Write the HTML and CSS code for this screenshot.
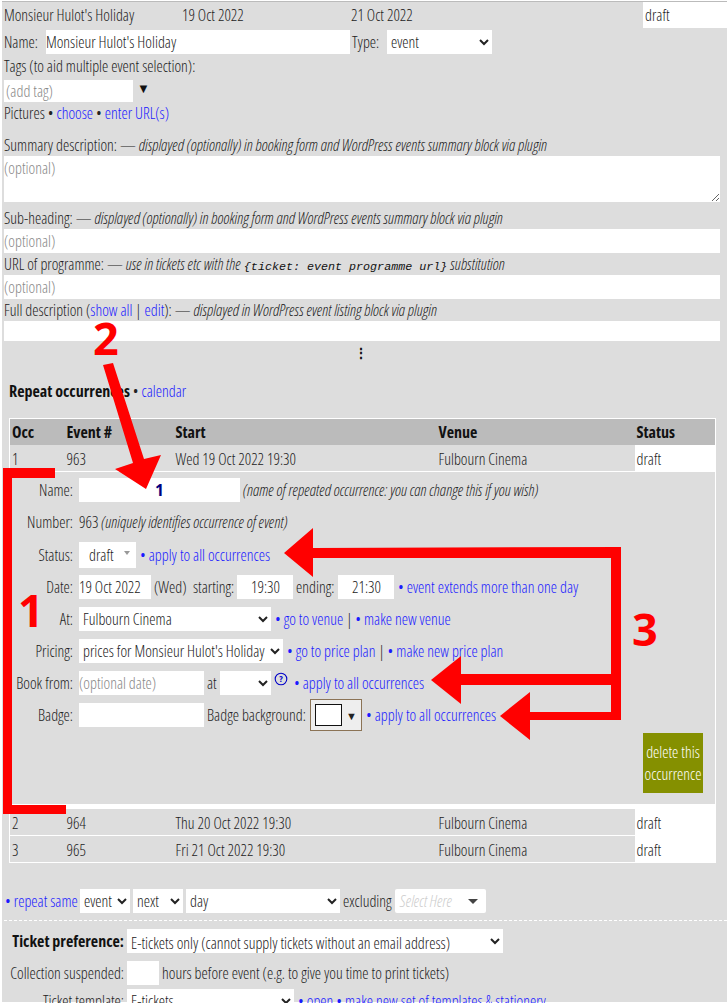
FILE: index.html
```html
<!DOCTYPE html>
<html lang="en">

<head>
  <meta charset="UTF-8">
  <title>Monsieur Hulot's Holiday</title>
  <link rel="stylesheet" href="styles.css">
</head>

<body>
  <div class="page">
    <div class="row summary">
      <span class="sum-title">Monsieur Hulot's Holiday</span>
      <span class="sum-start">19 Oct 2022</span>
      <span class="sum-end">21 Oct 2022</span>
      <input class="sum-status" type="text" value="draft">
    </div>
    <div class="row name-row">
      <label class="name-label">Name:</label>
      <input class="name-input" type="text" value="Monsieur Hulot's Holiday">
      <label class="type-label">Type:</label>
      <select class="type-select"><option>event</option></select>
    </div>
    <div class="line tags-line">Tags (to aid multiple event selection):</div>
    <div class="row tag-row">
      <input class="tag-input" type="text" placeholder="(add tag)">
      <span class="tag-arrow">▼</span>
    </div>
    <div class="line">Pictures • <a href="#">choose</a> • <a href="#">enter URL(s)</a></div>
    <div class="line summary-label">Summary description: — <em>displayed (optionally) in booking form and WordPress events summary block via plugin</em></div>
    <textarea class="wide summary-box" placeholder="(optional)"></textarea>
    <div class="line sub-label">Sub-heading: — <em>displayed (optionally) in booking form and WordPress events summary block via plugin</em></div>
    <input class="wide" type="text" placeholder="(optional)">
    <div class="line">URL of programme: — <em>use in tickets etc with the</em> <code>{ticket: event programme url}</code> <em>substitution</em></div>
    <input class="wide" type="text" placeholder="(optional)">
    <div class="line">Full description (<a href="#">show all</a> | <a href="#">edit</a>): — <em>displayed in WordPress event listing block via plugin</em></div>
    <div class="wide full-box"></div>
    <div class="more">⋮</div>

    <div class="repeat-head"><strong>Repeat occurrences</strong> • <a href="#">calendar</a></div>

    <table class="occ-table">
      <colgroup>
        <col class="col-occ">
        <col class="col-event">
        <col class="col-start">
        <col class="col-venue">
        <col class="col-status">
      </colgroup>
      <thead>
        <tr>
          <th>Occ</th>
          <th>Event #</th>
          <th>Start</th>
          <th>Venue</th>
          <th>Status</th>
        </tr>
      </thead>
      <tbody>
        <tr>
          <td>1</td>
          <td>963</td>
          <td>Wed 19 Oct 2022 19:30</td>
          <td>Fulbourn Cinema</td>
          <td class="status-cell">draft</td>
        </tr>
        <tr>
          <td colspan="5" class="detail-cell">
            <div class="detail">
              <div class="d-row d-name">
                <span class="d-label">Name:</span>
                <input class="occ-name" type="text" value="1">
                <em>(name of repeated occurrence: you can change this if you wish)</em>
              </div>
              <div class="d-row d-number">
                <span class="d-label">Number:</span>
                <span>963 <em>(uniquely identifies occurrence of event)</em></span>
              </div>
              <div class="d-row d-status">
                <span class="d-label">Status:</span>
                <span class="status-pick">draft<span class="status-caret"></span></span>
                <span class="d-links"><a href="#">• apply to all occurrences</a></span>
              </div>
              <div class="d-row">
                <span class="d-label">Date:</span>
                <input class="date-input" type="text" value="19 Oct 2022">
                <span class="wed">(Wed)</span>
                <span class="starting">starting:</span>
                <input class="time-input" type="text" value="19:30">
                <span class="ending">ending:</span>
                <input class="time-input" type="text" value="21:30">
                <span class="d-links"><a href="#">• event extends more than one day</a></span>
              </div>
              <div class="d-row">
                <span class="d-label">At:</span>
                <select class="venue-select"><option>Fulbourn Cinema</option></select>
                <span class="d-links"><a href="#">• go to venue</a> | <a href="#">• make new venue</a></span>
              </div>
              <div class="d-row">
                <span class="d-label">Pricing:</span>
                <select class="price-select"><option>prices for Monsieur Hulot's Holiday</option></select>
                <span class="d-links"><a href="#">• go to price plan</a> | <a href="#">• make new price plan</a></span>
              </div>
              <div class="d-row">
                <span class="d-label">Book from:</span>
                <input class="book-input" type="text" placeholder="(optional date)">
                <span class="at">at</span>
                <select class="at-select"><option></option></select>
                <svg class="help" width="14" height="14" viewBox="0 0 14 14">
                  <circle cx="7" cy="7" r="5.8" fill="none" stroke="#0000c8" stroke-width="1.1"/>
                  <text x="7" y="10.4" text-anchor="middle" class="help-mark">?</text>
                </svg>
                <span class="d-links book-link"><a href="#">• apply to all occurrences</a></span>
              </div>
              <div class="d-row">
                <span class="d-label">Badge:</span>
                <input class="book-input" type="text">
                <span class="badge-label">Badge background:</span>
                <span class="colour-pick"><span class="colour-swatch"></span><span class="colour-arrow">▼</span></span>
                <span class="d-links"><a href="#">• apply to all occurrences</a></span>
              </div>
              <div class="delete-wrap"><button class="delete-btn">delete this occurrence</button></div>
            </div>
          </td>
        </tr>
        <tr>
          <td>2</td>
          <td>964</td>
          <td>Thu 20 Oct 2022 19:30</td>
          <td>Fulbourn Cinema</td>
          <td class="status-cell">draft</td>
        </tr>
        <tr>
          <td>3</td>
          <td>965</td>
          <td>Fri 21 Oct 2022 19:30</td>
          <td>Fulbourn Cinema</td>
          <td class="status-cell">draft</td>
        </tr>
      </tbody>
    </table>

    <div class="row repeat-row">
      <a class="repeat-link" href="#">• repeat same</a>
      <select class="rep-event"><option>event</option></select>
      <select class="rep-next"><option>next</option></select>
      <select class="rep-day"><option>day</option></select>
      <span class="excluding">excluding</span>
      <span class="select-here"><em>Select Here</em><span class="select-caret"></span></span>
    </div>

    <div class="dashed"></div>

    <div class="t-row t-first">
      <span class="t-label"><strong>Ticket preference:</strong></span>
      <select class="ticket-select"><option>E-tickets only (cannot supply tickets without an email address)</option></select>
    </div>
    <div class="t-row">
      <span class="t-label">Collection suspended:</span>
      <input class="hours-input" type="text">
      <span>hours before event (e.g. to give you time to print tickets)</span>
    </div>
    <div class="t-row">
      <span class="t-label">Ticket template:</span>
      <select class="template-select"><option>E-tickets</option></select>
      <span class="d-links"><a href="#">• open</a> <a href="#">• make new set of templates &amp; stationery</a></span>
    </div>
  </div>

  <!-- hand drawn notes on top of the screenshot -->
  <svg class="notes" width="727" height="1003" viewBox="0 0 727 1003">
    <polygon points="3,468 55,468 55,478 12,478 12,805 66,805 66,814 3,814"/>
    <polygon points="103,365 113,363 144,459 161,455 146,489 115,469 133,463"/>
    <polygon points="284,553 313,528 313,548 621,547 621,720 530,720 530,740 500,716 530,692 530,712 611,712 611,685 461,685 461,704 431,680 461,656 461,674 611,674 611,558 313,558 313,577"/>
    <text x="18" y="627" class="note-num">1</text>
    <text x="93" y="355" class="note-num">2</text>
    <text x="632" y="646" class="note-num">3</text>
  </svg>
</body>

</html>
```

FILE: styles.css
```css
html,
body {
  margin: 0;
  height: 1003px;
  overflow: hidden;
  background: #fff;
}

body {
  position: relative;
  font-family: "Open Sans", sans-serif;
  font-stretch: 75%;
  font-size: 15.85px;
  font-weight: 300;
  color: #222;
}

em {
  font-size: 15.95px;
}

.page {
  margin: 1px 0 0 2px;
  border-top: 1px solid #bbb;
  background: #ddd;
  height: 1001px;
  padding-left: 2px;
  box-sizing: border-box;
}

a {
  color: #1a1aff;
  text-decoration: none;
}

input,
select,
textarea {
  font: inherit;
  color: #222;
  border: none;
  border-radius: 0;
  background: #fff;
  box-sizing: border-box;
  padding: 0;
  margin: 0;
  outline: none;
}

input::placeholder,
textarea::placeholder {
  color: #888;
}

.row,
.d-row,
.t-row {
  display: flex;
  align-items: center;
}

.line {
  height: 22px;
  line-height: 22px;
  white-space: nowrap;
}

code {
  font-family: "Liberation Mono", monospace;
  font-stretch: normal;
  font-weight: 400;
  font-size: 11.7px;
  font-style: italic;
  color: #111;
}

/* top of the form */
.summary {
  height: 26px;
}

.sum-title {
  width: 178px;
}

.sum-start {
  width: 169px;
}

.sum-end {
  width: 292px;
}

.sum-status {
  width: 84px;
  height: 26px;
  padding-left: 2px;
}

.name-row {
  height: 24px;
  margin-top: 2px;
}

.name-label {
  width: 42px;
}

.name-input {
  width: 304px;
  height: 24px;
}

.type-label {
  margin-left: 2px;
  width: 35px;
}

.type-select {
  width: 105px;
  height: 24px;
}

.tags-line {
  height: 26px;
  line-height: 24px;
}

.tag-row {
  height: 22px;
}

.tag-input {
  width: 129px;
  height: 22px;
  padding-left: 2px;
}

.tag-arrow {
  margin: -6px 0 0 4px;
  font-size: 13px;
  font-stretch: normal;
  color: #111;
}

.summary-label {
  margin-top: 10px;
}

.wide {
  display: block;
  width: 716px;
  height: 24px;
}

.summary-box {
  height: 46px;
  resize: vertical;
  padding-top: 1px;
}

.sub-label {
  margin-top: 5px;
}

.full-box {
  height: 20px;
  background: #fff;
}

.more {
  height: 24px;
  line-height: 24px;
  text-align: center;
  width: 714px;
  font-weight: bold;
  font-stretch: normal;
  font-size: 14px;
  color: #111;
}

.repeat-head {
  margin: 15px 0 0 5px;
  height: 22px;
  line-height: 22px;
}

strong {
  font-weight: bold;
  font-size: 16px;
  color: #111;
}

/* occurrences table */
.occ-table {
  margin: 16px 0 0 5px;
  width: 706px;
  table-layout: fixed;
  border-collapse: collapse;
  border: 1px solid #fff;
}

.col-occ {
  width: 55px;
}

.col-event {
  width: 109px;
}

.col-start {
  width: 263px;
}

.col-venue {
  width: 198px;
}

.col-status {
  width: 81px;
}

.occ-table th {
  background: #bbb;
  height: 26px;
  padding: 0 0 0 2px;
  text-align: left;
  font-size: 16px;
  font-weight: bold;
  color: #111;
}

.occ-table td {
  height: 24px;
  padding: 2px 0 0 2px;
  border-bottom: 1px solid #fff;
}

.occ-table .status-cell {
  background: #fff;
}

.occ-table .detail-cell {
  padding: 0;
  border-bottom: 5px solid #fff;
}

/* expanded occurrence */
.detail {
  height: 332px;
  padding-top: 6px;
  box-sizing: border-box;
}

.d-row {
  height: 24px;
  margin-bottom: 8px;
  white-space: nowrap;
}

.d-number {
  margin-bottom: 8px;
  margin-top: 8px;
}

.d-name {
  margin-bottom: 0;
}

.d-status {
  height: 26px;
  margin-bottom: 7px;
}

.d-label {
  width: 63px;
  margin-right: 6px;
  text-align: right;
  flex: none;
}

.occ-name {
  width: 161px;
  height: 24px;
  text-align: center;
  font-weight: bold;
  color: #000080;
  font-stretch: normal;
}

.d-name em {
  margin-left: 3px;
}

.status-pick {
  display: flex;
  align-items: center;
  width: 57px;
  height: 26px;
  padding-left: 10px;
  background: #fff;
  box-sizing: border-box;
}

.status-caret {
  margin: -4px 0 0 10px;
  border: 3.5px solid transparent;
  border-top: 4px solid #999;
  border-bottom: none;
}

.d-links {
  margin-left: 4px;
}

.date-input {
  width: 72px;
  height: 24px;
}

.wed {
  width: 33px;
  margin-left: 3px;
}

.starting {
  width: 41px;
  margin: 0 3px 0 6px;
}

.time-input {
  width: 56px;
  height: 24px;
  padding-left: 14px;
}

.ending {
  width: 39px;
  margin: 0 3px;
}

.venue-select {
  width: 192px;
  height: 24px;
}

.price-select {
  width: 204px;
  height: 24px;
}

.book-input {
  width: 125px;
  height: 24px;
}

.at {
  margin: 0 1px 0 3px;
  width: 12px;
}

.at-select {
  width: 51px;
  height: 24px;
}

.help {
  margin: -8px 0 0 3px;
}

.help-mark {
  font-size: 9.5px;
  font-weight: bold;
  fill: #0000c8;
}

.book-link {
  margin-left: 6px;
}

.badge-label {
  width: 100px;
  margin: 0 3px;
}

.colour-pick {
  display: flex;
  align-items: center;
  width: 52px;
  height: 32px;
  padding-left: 4px;
  border: 1px solid #8b7355;
  background: #eee;
  box-sizing: border-box;
}

.colour-swatch {
  width: 27px;
  height: 22px;
  background: #fff;
  border: 1px solid #111;
  box-sizing: border-box;
}

.colour-arrow {
  margin-left: 4px;
  font-size: 11px;
  font-stretch: normal;
  color: #222;
}

.delete-wrap {
  display: flex;
  justify-content: flex-end;
  padding-right: 12px;
  margin-top: -2px;
}

.delete-btn {
  width: 60px;
  height: 60px;
  padding: 0;
  border: none;
  background: #859000;
  color: #fff;
  font: inherit;
  line-height: 22px;
}

/* bottom of the form */
.repeat-row {
  height: 24px;
  margin: 26px 0 0 1px;
}

.repeat-link {
  flex: none;
  width: 72px;
  white-space: nowrap;
}

.repeat-row select {
  height: 24px;
  margin-left: 3px;
}

.rep-event {
  width: 50px;
}

.rep-next {
  width: 50px;
}

.rep-day {
  width: 154px;
}

.excluding {
  width: 49px;
  margin-left: 3px;
}

.select-here {
  display: flex;
  align-items: center;
  justify-content: space-between;
  width: 91px;
  height: 24px;
  margin-left: 3px;
  padding: 0 8px 0 5px;
  box-sizing: border-box;
  background: #fff;
  border-radius: 2px;
  color: #ccc;
}

.select-caret {
  border: 5px solid transparent;
  border-top: 5px solid #444;
  border-bottom: none;
}

.dashed {
  margin-top: 7px;
  border-top: 1px dashed #fff;
}

.t-row {
  height: 24px;
  margin-top: 8px;
  white-space: nowrap;
}

.t-first {
  margin-top: 8px;
}

.t-label {
  width: 120px;
  margin-right: 3px;
  text-align: right;
  flex: none;
}

.ticket-select {
  width: 376px;
  height: 24px;
  padding-top: 2px;
}

.hours-input {
  width: 32px;
  height: 24px;
  margin-right: 3px;
}

.template-select {
  width: 167px;
  height: 24px;
}

.t-row:last-child {
  margin-top: 4px;
}

/* annotations */
.notes {
  position: absolute;
  left: 0;
  top: 0;
  pointer-events: none;
}

.notes polygon {
  fill: #f00;
}

.note-num {
  font-family: "Open Sans", sans-serif;
  font-size: 45px;
  font-stretch: 100%;
  font-weight: bold;
  fill: #f00;
}
```
